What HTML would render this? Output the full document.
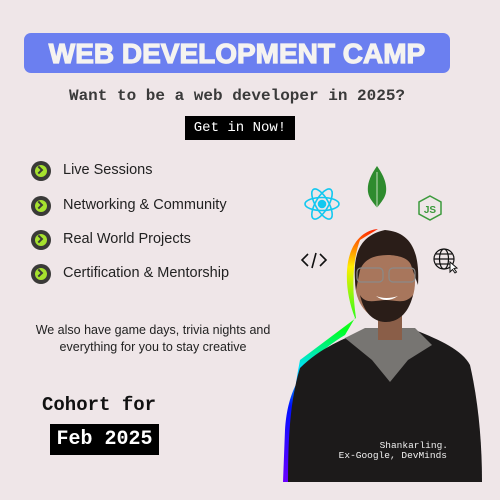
<!DOCTYPE html>
<html><head><meta charset="utf-8"><style>
body{margin:0;width:500px;height:500px;background:#efe6e8;position:relative;overflow:hidden;font-family:"Liberation Sans",sans-serif}
.a{position:absolute}
.banner{left:24px;top:33px;width:426px;height:40px;background:#6b7ff0;border-radius:7px;color:#f5f3f0;font-weight:900;font-size:28px;text-align:center;line-height:41px;letter-spacing:0px;-webkit-text-stroke:1.2px #f5f3f0}
.mono{font-family:"Liberation Mono",monospace;font-weight:bold}
.li{left:31px;font-size:14.5px;color:#222}
.li .ic{position:absolute;left:0;top:0;width:20px;height:20px;border-radius:50%;background:#3a3a38}
.li .ic:after{content:"";position:absolute;left:4px;top:4px;width:12px;height:12px;border-radius:50%;background:#a6e22e}
.li .ic:before{content:"";position:absolute;left:5px;top:6px;width:4px;height:4px;border-right:2.5px solid #3a3a38;border-top:2.5px solid #3a3a38;transform:rotate(45deg);z-index:2}
.li span{position:absolute;left:32px;top:1px;white-space:nowrap}
</style></head><body>
<div class="a banner">WEB DEVELOPMENT CAMP</div>
<div class="a mono" style="left:0;width:474px;text-align:center;top:87px;font-size:16px;color:#3a3a3a">Want to be a web developer in 2025?</div>
<div class="a mono" style="left:185px;top:116px;width:110px;height:24px;background:#000;color:#fff;font-size:14px;line-height:24px;text-align:center;font-weight:normal">Get in Now!</div>
<div class="a li" style="top:161px"><div class="ic"></div><span>Live Sessions</span></div>
<div class="a li" style="top:196px"><div class="ic"></div><span>Networking &amp; Community</span></div>
<div class="a li" style="top:230px"><div class="ic"></div><span>Real World Projects</span></div>
<div class="a li" style="top:264px"><div class="ic"></div><span>Certification &amp; Mentorship</span></div>
<div class="a" style="left:20px;width:266px;text-align:center;top:322px;font-size:12.5px;line-height:17px;color:#222">We also have game days, trivia nights and<br>everything for you to stay creative</div>
<div class="a mono" style="left:42px;top:394px;font-size:19px;color:#111">Cohort for</div>
<div class="a mono" style="left:50px;top:424px;width:109px;height:31px;background:#000;color:#fff;font-size:20px;line-height:31px;text-align:center">Feb 2025</div>
<svg class="a" style="left:0;top:0" width="500" height="500">
<defs><linearGradient id="rb" x1="0" y1="1" x2="0" y2="0"><stop offset="0" stop-color="#6a00ff"/><stop offset=".3" stop-color="#0010ff"/><stop offset=".45" stop-color="#00e0ff"/><stop offset=".6" stop-color="#00ff20"/><stop offset=".85" stop-color="#ffee00"/><stop offset="1" stop-color="#ff2200"/></linearGradient></defs>
<g transform="translate(322,204)" fill="none" stroke="#12c8f0" stroke-width="1.6"><ellipse rx="17" ry="6.5"/><ellipse rx="17" ry="6.5" transform="rotate(60)"/><ellipse rx="17" ry="6.5" transform="rotate(-60)"/><circle r="3.5" fill="#12c8f0"/></g>
<path d="M377 166 C370 176 367 184 368 192 C369 199 374 203 377 208 C380 203 385 199 386 192 C387 184 384 176 377 166Z" fill="#2e8b2e"/><line x1="377" y1="172" x2="377" y2="208" stroke="#e8f0e0" stroke-width=".8"/>
<polygon points="430,196 441,202 441,214 430,220 419,214 419,202" fill="none" stroke="#3c9a3c" stroke-width="1.5"/><text x="430" y="213" font-family="Liberation Sans" font-size="10" fill="#3c9a3c" text-anchor="middle" font-weight="bold">JS</text>
<path d="M308 254 L302 260 L308 266 M316 253 L312 268 M320 254 L326 260 L320 266" fill="none" stroke="#111" stroke-width="1.6"/>
<g fill="none" stroke="#111" stroke-width="1.2"><circle cx="444" cy="259" r="10"/><ellipse cx="444" cy="259" rx="4.5" ry="10"/><line x1="434" y1="259" x2="454" y2="259"/><line x1="436" y1="254" x2="452" y2="254"/><line x1="436" y1="264" x2="452" y2="264"/></g>
<path d="M450 262 L450 272 L452.5 269.5 L455 273 L456.5 272 L454 268.5 L457 268 Z" fill="#fff" stroke="#111" stroke-width="1"/>
<path d="M283 482 L285 430 C287 400 295 365 345 335 L355 318 C348 300 345 280 348 262 C352 240 365 230 378 229 L360 240 C352 262 352 290 356 318 L300 360 C292 400 290 440 288 482Z" fill="url(#rb)"/>
<path d="M288 482 C288 440 290 400 300 368 C320 348 345 338 365 330 L415 330 C440 340 462 350 470 365 C478 400 482 440 482 482Z" fill="#1c1a1a"/>
<path d="M345 338 L365 328 L415 328 L432 345 L408 360 L390 382 L372 360 Z" fill="#777572"/>
<rect x="378" y="305" width="24" height="35" fill="#8a5e48"/>
<ellipse cx="385" cy="282" rx="30" ry="38" fill="#a8765c"/>
<path d="M356 290 C352 260 356 236 385 230 C410 232 420 250 418 285 L412 268 C410 258 400 256 390 255 C375 255 365 258 360 270Z" fill="#2a1d18"/>
<path d="M360 295 C365 318 378 322 386 322 C396 322 408 316 413 295 C405 305 395 300 386 300 C376 300 366 305 360 295Z" fill="#2a1d18"/>
<rect x="357" y="268" width="26" height="14" rx="4" fill="none" stroke="#8a8a88" stroke-width="1.2"/><rect x="389" y="268" width="26" height="14" rx="4" fill="none" stroke="#8a8a88" stroke-width="1.2"/>
<path d="M376 296 Q386 304 398 296 Q386 300 376 296Z" fill="#fff"/>
<text x="448" y="448" font-family="Liberation Mono" font-size="9.5" fill="#f0f0f0" text-anchor="end">Shankarling.</text>
<text x="447" y="458" font-family="Liberation Mono" font-size="9.5" fill="#f0f0f0" text-anchor="end">Ex-Google, DevMinds</text>
</svg>
</body></html>
